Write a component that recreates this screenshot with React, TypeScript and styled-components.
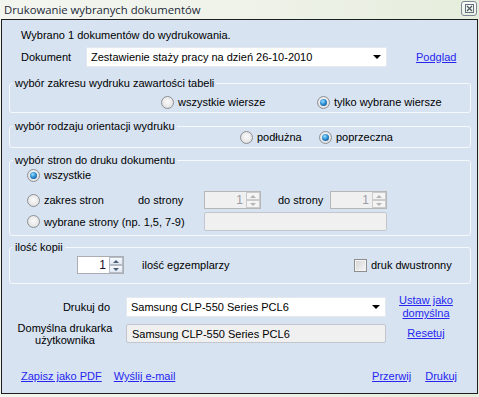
import styled, { createGlobalStyle } from "styled-components";

const GlobalStyle = createGlobalStyle`
  html, body {
    margin: 0;
    padding: 0;
    background: #eef2e8;
  }
  body {
    font-family: "Liberation Sans", Arial, sans-serif;
    font-size: 11px;
    color: #000;
  }
`;

const Window = styled.div`
  width: 479px;
  height: 397px;
  display: flex;
  flex-direction: column;
  background: linear-gradient(90deg, #f3f5ef 0%, #eef2e8 55%, #e5eddc 100%);
`;

const TitleBar = styled.div`
  height: 19px;
  display: flex;
  justify-content: space-between;
  padding: 0 2px 0 4px;
`;

const Title = styled.span`
  font-family: "Open Sans", sans-serif;
  font-size: 11.3px;
  line-height: 19px;
  color: #1b2838;
`;

const CloseButton = styled.div`
  width: 16px;
  height: 15px;
  margin-top: 1px;
  box-sizing: border-box;
  border: 1px solid #7d8894;
  border-radius: 3px;
  background: linear-gradient(#fbfcfa, #e9eee4);
  display: flex;
  align-items: center;
  justify-content: center;
`;

const Client = styled.div`
  flex: 1;
  margin: 0 1px 3px;
  border: 1px solid #1e1e1e;
  background: #d7e3f1;
  display: flex;
  flex-direction: column;
`;

const Info = styled.div`
  margin-top: 8px;
  padding-left: 19px;
  line-height: 14px;
`;

const DocRow = styled.div`
  display: flex;
  align-items: center;
  height: 20px;
  margin-top: 5px;
  padding-left: 19px;
`;

const DocLabel = styled.span`
  width: 65px;
`;

const Select = styled.div<{ $width: number }>`
  width: ${(p) => p.$width}px;
  height: 20px;
  box-sizing: border-box;
  border: 1px solid #e4e9ef;
  background: #fff;
  display: flex;
  align-items: center;
  padding: 0 4px 0 4px;
`;

const SelectText = styled.span`
  flex: 1;
`;

const Caret = styled.span`
  width: 0;
  height: 0;
  border-left: 4px solid transparent;
  border-right: 4px solid transparent;
  border-top: 4px solid #000;
  margin-right: 1px;
`;

const Link = styled.a<{ $ml?: number }>`
  color: #2626f0;
  text-decoration: underline;
  cursor: pointer;
  margin-left: ${(p) => p.$ml ?? 0}px;
`;

const Group = styled.fieldset<{ $top: number; $pt: number; $pb: number }>`
  margin: ${(p) => p.$top}px 6px 0 7px;
  padding: ${(p) => p.$pt}px 0 ${(p) => p.$pb}px;
  border: 1px solid #f6f9fc;
  border-radius: 3px;
  min-width: 0;
`;

const Legend = styled.legend`
  margin-left: 3px;
  padding: 0 2px;
  line-height: 12px;
`;

const OptionRow = styled.div<{ $cols: string; $pl: number; $mt: number; $h: number }>`
  display: grid;
  grid-template-columns: ${(p) => p.$cols};
  align-items: center;
  padding-left: ${(p) => p.$pl}px;
  margin-top: ${(p) => p.$mt}px;
  height: ${(p) => p.$h}px;
`;

const Option = styled.label<{ $span?: string }>`
  display: flex;
  align-items: center;
  gap: 4px;
  white-space: nowrap;
  grid-column: ${(p) => p.$span ?? "auto"};
`;

const RadioDot = styled.span<{ $on?: boolean }>`
  width: 13px;
  height: 13px;
  flex: none;
  box-sizing: border-box;
  border-radius: 50%;
  border: 1px solid #8d9095;
  background: radial-gradient(circle at 50% 45%, #fbfbfb 0%, #e9e9e9 55%, #d2d2d2 100%);
  display: flex;
  align-items: center;
  justify-content: center;

  &::after {
    content: "";
    display: ${(p) => (p.$on ? "block" : "none")};
    width: 7px;
    height: 7px;
    border-radius: 50%;
    background: radial-gradient(circle at 40% 35%, #9be2ff 0%, #2d8fd6 45%, #123f6c 100%);
  }
`;

const CheckBox = styled.span`
  width: 13px;
  height: 13px;
  flex: none;
  box-sizing: border-box;
  border: 1px solid #8e8f8f;
  box-shadow: inset 0 0 0 1px #f3f3f3;
  background: linear-gradient(135deg, #d4d4d4, #f6f6f6);
`;

const Cell = styled.span`
  white-space: nowrap;
`;

const Spin = styled.div<{ $disabled?: boolean }>`
  height: 18px;
  box-sizing: border-box;
  border: 1px solid ${(p) => (p.$disabled ? "#b6b6b6" : "#abadb3")};
  background: ${(p) => (p.$disabled ? "#f0f0f0" : "#fff")};
  display: flex;
`;

const SpinValue = styled.span<{ $disabled?: boolean }>`
  flex: 1;
  text-align: right;
  padding-right: 3px;
  line-height: 16px;
  font-size: 12px;
  color: ${(p) => (p.$disabled ? "#9a9aa8" : "#1a0f2a")};
`;

const SpinButtons = styled.div`
  width: 14px;
  display: flex;
  flex-direction: column;
`;

const SpinButton = styled.span<{ $disabled?: boolean }>`
  flex: 1;
  box-sizing: border-box;
  border: 1px solid ${(p) => (p.$disabled ? "#cbcbcb" : "#b4bcc8")};
  background: ${(p) => (p.$disabled ? "#f4f4f4" : "linear-gradient(#f6f9fd, #e2e9f3)")};
  display: flex;
  align-items: center;
  justify-content: center;
`;

const Tri = styled.span<{ $up?: boolean; $disabled?: boolean }>`
  width: 0;
  height: 0;
  border-left: 3px solid transparent;
  border-right: 3px solid transparent;
  ${(p) =>
    p.$up
      ? `border-bottom: 3px solid ${p.$disabled ? "#b4b4b4" : "#4a5d78"};`
      : `border-top: 3px solid ${p.$disabled ? "#b4b4b4" : "#4a5d78"};`}
`;

const TextBox = styled.div<{ $span?: string; $h: number }>`
  grid-column: ${(p) => p.$span ?? "auto"};
  height: ${(p) => p.$h}px;
  box-sizing: border-box;
  border: 1px solid #c3c6cc;
  border-radius: 2px;
  background: #f0f0f0;
  display: flex;
  align-items: center;
  padding-left: 5px;
`;

const PrinterGrid = styled.div`
  display: grid;
  grid-template-columns: 109px 260px 80px;
  grid-template-rows: 20px 19px;
  row-gap: 7px;
  padding-left: 15px;
  margin-top: 13px;
  align-items: center;
`;

const RightLabel = styled.span`
  text-align: right;
  padding-right: 16px;
`;

const StackLabel = styled.span`
  text-align: center;
  padding-right: 13px;
  line-height: 12px;
  white-space: nowrap;
`;

const LinkStack = styled.div`
  display: flex;
  flex-direction: column;
  align-items: center;
  line-height: 13px;
`;

const Footer = styled.div`
  display: flex;
  align-items: center;
  line-height: 14px;
  margin-top: 26px;
  padding: 0 20px 0 19px;
`;

const Spacer = styled.span`
  flex: 1;
`;

const Radio = ({ on, text, span }: { on?: boolean; text: string; span?: string }) => (
  <Option $span={span}>
    <RadioDot $on={on} />
    {text}
  </Option>
);

const SpinBox = ({ disabled }: { disabled?: boolean }) => (
  <Spin $disabled={disabled}>
    <SpinValue $disabled={disabled}>1</SpinValue>
    <SpinButtons>
      <SpinButton $disabled={disabled}>
        <Tri $up $disabled={disabled} />
      </SpinButton>
      <SpinButton $disabled={disabled}>
        <Tri $disabled={disabled} />
      </SpinButton>
    </SpinButtons>
  </Spin>
);

const PAGE_COLS = "111px 66px 57px 17px 52px 57px";

const App = () => {
  return (
    <>
      <GlobalStyle />
      <Window>
        <TitleBar>
          <Title>Drukowanie wybranych dokumentów</Title>
          <CloseButton>
            <svg width="9" height="9" viewBox="0 0 9 9">
              <rect x="0.5" y="0.5" width="8" height="8" fill="none" stroke="#66717d" />
              <path d="M2 2 L7 7 M7 2 L2 7" stroke="#4f5964" strokeWidth="1.2" />
            </svg>
          </CloseButton>
        </TitleBar>
        <Client>
          <Info>Wybrano 1 dokumentów do wydrukowania.</Info>
          <DocRow>
            <DocLabel>Dokument</DocLabel>
            <Select $width={301}>
              <SelectText>Zestawienie staży pracy na dzień 26-10-2010</SelectText>
              <Caret />
            </Select>
            <Link $ml={29}>Podglad</Link>
          </DocRow>

          <Group $top={10} $pt={4} $pb={1}>
            <Legend>wybór zakresu wydruku zawartości tabeli</Legend>
            <OptionRow $cols="156px auto" $pl={151} $mt={0} $h={18}>
              <Radio text="wszystkie wiersze" />
              <Radio on text="tylko wybrane wiersze" />
            </OptionRow>
          </Group>

          <Group $top={7} $pt={0} $pb={2}>
            <Legend>wybór rodzaju orientacji wydruku</Legend>
            <OptionRow $cols="79px auto" $pl={230} $mt={-3} $h={16}>
              <Radio text="podłużna" />
              <Radio on text="poprzeczna" />
            </OptionRow>
          </Group>

          <Group $top={6} $pt={0} $pb={4}>
            <Legend>wybór stron do druku dokumentu</Legend>
            <OptionRow $cols={PAGE_COLS} $pl={17} $mt={0} $h={18}>
              <Radio on text="wszystkie" />
            </OptionRow>
            <OptionRow $cols={PAGE_COLS} $pl={17} $mt={7} $h={18}>
              <Radio text="zakres stron" />
              <Cell>do strony</Cell>
              <SpinBox disabled />
              <span />
              <Cell>do strony</Cell>
              <SpinBox disabled />
            </OptionRow>
            <OptionRow $cols={PAGE_COLS} $pl={17} $mt={3} $h={19}>
              <Radio text="wybrane strony (np. 1,5, 7-9)" span="1 / 3" />
              <TextBox $span="3 / -1" $h={19} />
            </OptionRow>
          </Group>

          <Group $top={5} $pt={3} $pb={9}>
            <Legend>ilość kopii</Legend>
            <OptionRow $cols="47px 18px 212px auto" $pl={67} $mt={0} $h={18}>
              <SpinBox />
              <span />
              <Cell>ilość egzemplarzy</Cell>
              <Option>
                <CheckBox />
                druk dwustronny
              </Option>
            </OptionRow>
          </Group>

          <PrinterGrid>
            <RightLabel>Drukuj do</RightLabel>
            <Select $width={260}>
              <SelectText>Samsung CLP-550 Series PCL6</SelectText>
              <Caret />
            </Select>
            <LinkStack>
              <Link>Ustaw jako</Link>
              <Link>domyślna</Link>
            </LinkStack>
            <StackLabel>
              Domyślna drukarka
              <br />
              użytkownika
            </StackLabel>
            <TextBox $h={19}>Samsung CLP-550 Series PCL6</TextBox>
            <LinkStack>
              <Link>Resetuj</Link>
            </LinkStack>
          </PrinterGrid>

          <Footer>
            <Link>Zapisz jako PDF</Link>
            <Link $ml={12}>Wyślij e-mail</Link>
            <Spacer />
            <Link>Przerwij</Link>
            <Link $ml={14}>Drukuj</Link>
          </Footer>
        </Client>
      </Window>
    </>
  );
};

export default App;
